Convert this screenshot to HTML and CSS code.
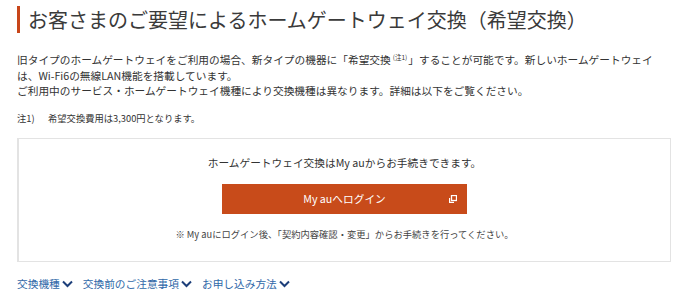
FILE: index.html
```html
<!DOCTYPE html>
<html lang="ja">
<head>
<meta charset="utf-8">
<link rel="stylesheet" href="styles.css">
</head>
<body>
<div class="page">
  <h1 class="title">お客さまのご要望によるホームゲートウェイ交換（希望交換）</h1>
  <p class="lead">旧タイプのホームゲートウェイをご利用の場合、新タイプの機器に「希望交換<sup>(注1)</sup>」することが可能です。新しいホームゲートウェイは、Wi-Fi6の無線LAN機能を搭載しています。<br>ご利用中のサービス・ホームゲートウェイ機種により交換機種は異なります。詳細は以下をご覧ください。</p>
  <p class="note"><span class="note-label">注1)</span>希望交換費用は3,300円となります。</p>
  <div class="box">
    <p class="box-text">ホームゲートウェイ交換はMy auからお手続きできます。</p>
    <a class="btn" href="#">My auへログイン
      <svg class="ext" width="8" height="8" viewBox="0 0 8 8"><rect x="2.5" y="0.5" width="5" height="5" fill="none" stroke="#fff" stroke-width="1.3"/><path d="M0.5 3v4.5H5" fill="none" stroke="#fff" stroke-width="1.3"/></svg>
    </a>
    <p class="box-note">※ My auにログイン後、「契約内容確認・変更」からお手続きを行ってください。</p>
  </div>
  <nav class="links">
    <a href="#">交換機種<svg class="chev" width="11" height="8" viewBox="0 0 11 8"><path d="M1 1.5l4.5 4.5L10 1.5" fill="none" stroke="#1d3f7a" stroke-width="2"/></svg></a>
    <a href="#">交換前のご注意事項<svg class="chev" width="11" height="8" viewBox="0 0 11 8"><path d="M1 1.5l4.5 4.5L10 1.5" fill="none" stroke="#1d3f7a" stroke-width="2"/></svg></a>
    <a href="#">お申し込み方法<svg class="chev" width="11" height="8" viewBox="0 0 11 8"><path d="M1 1.5l4.5 4.5L10 1.5" fill="none" stroke="#1d3f7a" stroke-width="2"/></svg></a>
  </nav>
</div>
</body>
</html>
```
FILE: styles.css
```css
* { box-sizing: border-box; }
html, body { margin: 0; padding: 0; background: #fff; }
body {
  font-family: "Noto Sans CJK JP", "Noto Sans", sans-serif;
  color: #333;
}
.page {
  padding: 6px 19px 0 17px;
}
.title {
  margin: 0;
  border-left: 3px solid #c8461a;
  padding-left: 8px;
  font-size: 20px;
  font-weight: 400;
  line-height: 27px;
  color: #3a3a3a;
}
.lead {
  margin: 19px 0 0;
  font-size: 10.7px;
  line-height: 15.5px;
}
.lead sup {
  font-size: 6.5px;
  line-height: 0;
  vertical-align: 4px;
  padding: 0 1px 0 2px;
}
.note {
  margin: 12px 0 0;
  font-size: 9.3px;
  line-height: 14px;
}
.note-label { display: inline-block; width: 31px; }
.box {
  margin-top: 13px;
  border: 1px solid #e3e3e3;
  border-left-width: 2px;
  display: flex;
  flex-direction: column;
  align-items: center;
  padding: 16px 0 20px;
}
.box-text {
  margin: 0;
  font-size: 10.7px;
  line-height: 16px;
}
.btn {
  margin-top: 13px;
  width: 245px;
  height: 30px;
  background: #c84b1a;
  color: #fff;
  text-decoration: none;
  font-size: 10.7px;
  display: flex;
  align-items: center;
  justify-content: center;
  position: relative;
}
.ext { position: absolute; right: 10px; top: 11px; }
.box-note {
  margin: 13px 0 0;
  font-size: 9.3px;
  line-height: 14px;
  color: #444;
}
.links {
  display: flex;
  gap: 10px;
  margin-top: 14px;
}
.links a {
  color: #3068a8;
  text-decoration: none;
  font-size: 10.7px;
  line-height: 16px;
  display: flex;
  align-items: center;
  gap: 2px;
}
```
